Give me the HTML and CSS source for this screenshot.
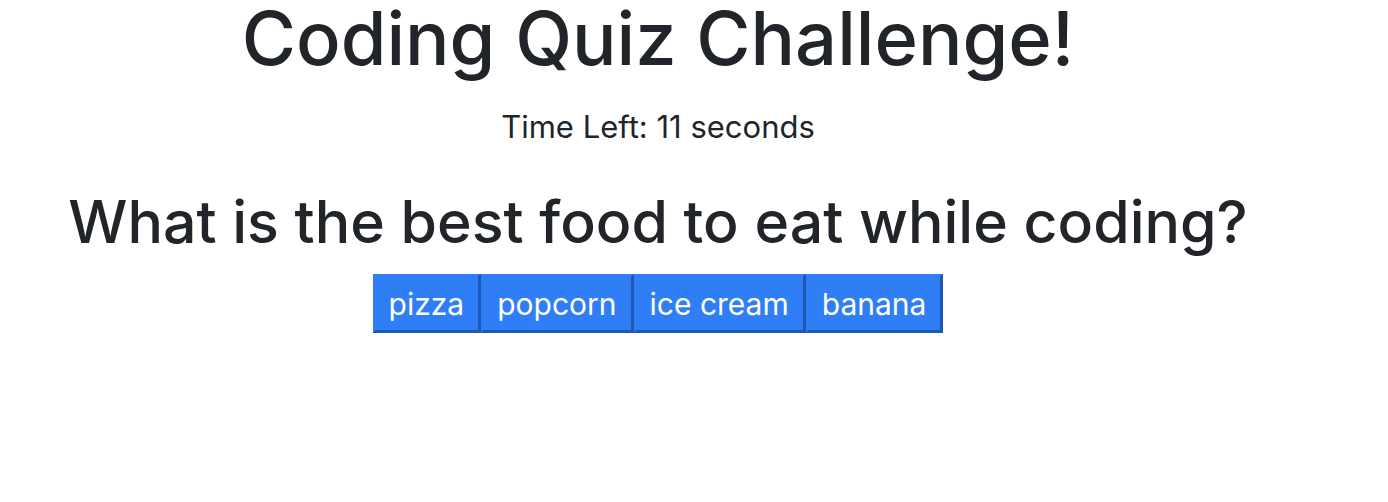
FILE: index.html
```html
<!DOCTYPE html>
<html lang="en">
<head>
<meta charset="utf-8">
<title>Coding Quiz Challenge</title>
<link rel="stylesheet" href="styles.css">
</head>
<body>
<main class="quiz">
  <h1 class="title">Coding Quiz Challenge!</h1>
  <p class="timer">Time Left: 11 seconds</p>
  <h2 class="question">What is the best food to eat while coding?</h2>
  <div class="choices">
    <button class="choice">pizza</button>
    <button class="choice">popcorn</button>
    <button class="choice">ice cream</button>
    <button class="choice">banana</button>
  </div>
</main>
</body>
</html>
```
FILE: styles.css
```css
html, body {
  margin: 0;
  padding: 0;
  background: #ffffff;
}
body {
  color: #212529;
  font-family: Inter, "Noto Sans", sans-serif;
}
.quiz {
  width: 1316px;
  display: flex;
  flex-direction: column;
  align-items: center;
  text-align: center;
}
.title {
  font-family: Inter, "Noto Sans", sans-serif;
  font-weight: 500;
  font-size: 74px;
  line-height: 76px;
  margin: 0;
}
.timer {
  font-size: 31px;
  line-height: 36px;
  margin: 33px 0 0;
}
.question {
  font-size: 59px;
  font-weight: 500;
  line-height: 64px;
  margin: 45px 0 0;
}
.choices {
  display: flex;
  margin-top: 20px;
}
.choice {
  font-family: Inter, "Noto Sans", sans-serif;
  font-size: 30px;
  line-height: 34px;
  color: #ffffff;
  background: #2f7ef5;
  border-style: solid;
  border-width: 2px 3px 3px 2px;
  border-color: #2f7ef5 #1d59b3 #1d59b3 #2f7ef5;
  padding: 11px 14px 9px;
  margin: 0;
}
```
